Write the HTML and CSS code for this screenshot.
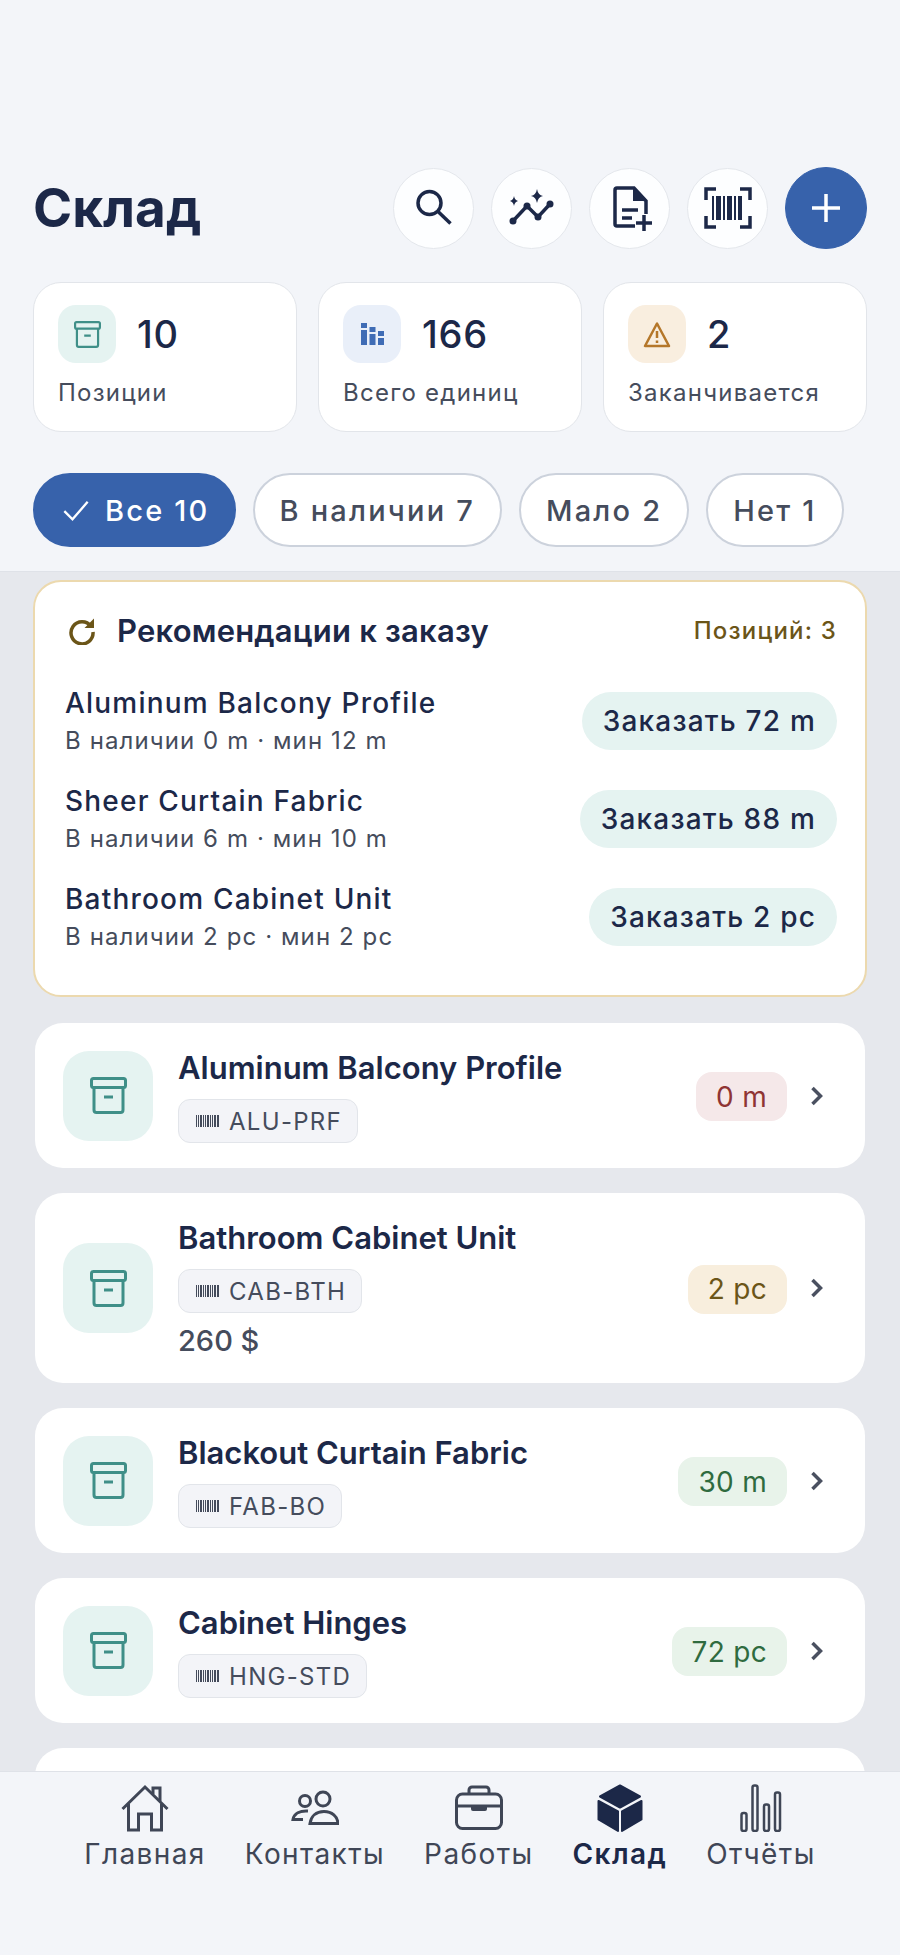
FILE: index.html
```html
<!DOCTYPE html>
<html lang="ru">
<head>
    <meta charset="UTF-8">
    <meta name="viewport" content="width=device-width, initial-scale=1.0">
    <title>Склад</title>
    <link rel="stylesheet" href="styles.css">
</head>
<body>
    <svg class="defs" width="0" height="0">
        <symbol id="box" viewBox="0 0 37 37">
            <rect x="1.500" y="1.500" width="34" height="9" rx="2" fill="none" stroke="currentColor" stroke-width="3"/>
            <path d="M4 10.500V33a2.500 2.500 0 0 0 2.500 2.500h24A2.500 2.500 0 0 0 33 33V10.500M14 20h9" fill="none" stroke="currentColor" stroke-width="3"/>
        </symbol>
        <symbol id="barcode-small" viewBox="0 0 23 12">
            <path d="M0 0h1v12H0zM2 0h1v12H2zM4 0h2v12H4zM7 0h1v12H7zM9 0h1v12H9zM11 0h2v12h-2zM14 0h1v12h-1zM16 0h1v12h-1zM18 0h2v12h-2zM21 0h2v12h-2z" fill="currentColor"/>
        </symbol>
        <symbol id="chevron" viewBox="0 0 14 20">
            <path d="M2.500 2l8 8-8 8" fill="none" stroke="currentColor" stroke-width="3.500"/>
        </symbol>
    </svg>

    <div class="app">
        <header class="top">
            <div class="title-row">
                <h1>Склад</h1>
                <div class="actions">
                    <button class="round-btn">
                        <svg width="48" height="48" viewBox="0 0 48 48" fill="none" stroke="#1c2848" stroke-width="3.500">
                            <circle cx="19.500" cy="19" r="11.500"/>
                            <path d="M28 27.500l12.500 12"/>
                        </svg>
                    </button>
                    <button class="round-btn">
                        <svg width="48" height="48" viewBox="0 0 48 48" fill="none" stroke="#1c2848">
                            <path d="M5 37l14-15 11 11 12-13" stroke-width="3.500"/>
                            <circle cx="5" cy="37" r="3.500" fill="#1c2848" stroke="none"/>
                            <circle cx="19" cy="22" r="3.500" fill="#1c2848" stroke="none"/>
                            <circle cx="30" cy="33" r="3.500" fill="#1c2848" stroke="none"/>
                            <circle cx="42" cy="20" r="3.500" fill="#1c2848" stroke="none"/>
                            <path d="M29 5q1 6 6 7q-5 1-6 7q-1-6-6-7q5-1 6-7zM6 12q.6 4 4 5q-3.400 1-4 5q-.6-4-4-5q3.400-1 4-5z" fill="#1c2848" stroke="none"/>
                        </svg>
                    </button>
                    <button class="round-btn">
                        <svg width="48" height="48" viewBox="0 0 48 48" fill="none" stroke="#1c2848" stroke-width="3.500">
                            <path d="M29 42H11a2 2 0 0 1-2-2V6a2 2 0 0 1 2-2h17l12 13v13"/>
                            <path d="M27 3l14 14H27z" fill="#1c2848" stroke="none"/>
                            <path d="M16 26h16M16 34h10M38 31v16M30 39h16"/>
                        </svg>
                    </button>
                    <button class="round-btn">
                        <svg width="50" height="48" viewBox="0 0 50 48" fill="none" stroke="#1c2848">
                            <path d="M13 5H3v11M37 5h10v11M13 43H3V32M37 43h10V32" stroke-width="3.500"/>
                            <path d="M9 12h2v24H9zM13 12h5v24h-5zM20 12h2v24h-2zM24 12h5v24h-5zM31 12h2v24h-2zM35 12h4v24h-4z" fill="#1c2848" stroke="none"/>
                        </svg>
                    </button>
                    <button class="round-btn primary">
                        <svg width="30" height="30" viewBox="0 0 30 30" fill="none" stroke="#fff" stroke-width="3.500">
                            <path d="M15 1v28M1 15h28"/>
                        </svg>
                    </button>
                </div>
            </div>

            <div class="stats">
                <div class="stat">
                    <div class="stat-top">
                        <span class="stat-icon teal"><svg width="27" height="27"><use href="#box"/></svg></span>
                        <span class="stat-value">10</span>
                    </div>
                    <div class="stat-label">Позиции</div>
                </div>
                <div class="stat">
                    <div class="stat-top">
                        <span class="stat-icon blue">
                            <svg width="23" height="22" viewBox="0 0 23 22" fill="currentColor">
                                <path d="M0 0h6v5H0zM0 7h6v15H0zM8.500 4h6v5h-6zM8.500 11h6v11h-6zM17 8h6v5h-6zM17 15h6v7h-6z"/>
                            </svg>
                        </span>
                        <span class="stat-value">166</span>
                    </div>
                    <div class="stat-label">Всего единиц</div>
                </div>
                <div class="stat">
                    <div class="stat-top">
                        <span class="stat-icon amber">
                            <svg width="28" height="27" viewBox="0 0 28 27" fill="none" stroke="currentColor" stroke-width="2.500">
                                <path d="M14 2.500L2 25h24z" stroke-linejoin="round"/>
                                <path d="M14 10v7M14 19.500v2.500"/>
                            </svg>
                        </span>
                        <span class="stat-value">2</span>
                    </div>
                    <div class="stat-label">Заканчивается</div>
                </div>
            </div>

            <div class="chips">
                <span class="chip active">
                    <svg width="28" height="28" viewBox="0 0 24 24" fill="none" stroke="#fff" stroke-width="2"><path d="M2 13l7 7L22 5"/></svg>
                    <span>Все 10</span>
                </span>
                <span class="chip">В наличии 7</span>
                <span class="chip">Мало 2</span>
                <span class="chip">Нет 1</span>
            </div>
        </header>

        <main class="content">
            <section class="reco">
                <div class="reco-head">
                    <svg width="28" height="28" viewBox="0 0 28 28" fill="none" stroke="#6b5518" stroke-width="3.500">
                        <path d="M23 9.500A11 11 0 1 0 25 15"/>
                        <path d="M26 1.500V11h-9.500z" fill="#6b5518" stroke="none"/>
                    </svg>
                    <h2>Рекомендации к заказу</h2>
                    <span class="reco-count">Позиций: 3</span>
                </div>
                <div class="reco-row">
                    <div>
                        <div class="reco-name">Aluminum Balcony Profile</div>
                        <div class="reco-sub">В наличии 0 m · мин 12 m</div>
                    </div>
                    <span class="order-pill">Заказать 72 m</span>
                </div>
                <div class="reco-row">
                    <div>
                        <div class="reco-name">Sheer Curtain Fabric</div>
                        <div class="reco-sub">В наличии 6 m · мин 10 m</div>
                    </div>
                    <span class="order-pill">Заказать 88 m</span>
                </div>
                <div class="reco-row">
                    <div>
                        <div class="reco-name">Bathroom Cabinet Unit</div>
                        <div class="reco-sub">В наличии 2 pc · мин 2 pc</div>
                    </div>
                    <span class="order-pill">Заказать 2 pc</span>
                </div>
            </section>

            <article class="item">
                <span class="item-icon"><svg width="37" height="37"><use href="#box"/></svg></span>
                <div class="item-body">
                    <div class="item-name">Aluminum Balcony Profile</div>
                    <span class="sku"><svg width="23" height="12"><use href="#barcode-small"/></svg>ALU-PRF</span>
                </div>
                <span class="qty out">0 m</span>
                <svg class="chevron" width="14" height="20"><use href="#chevron"/></svg>
            </article>

            <article class="item">
                <span class="item-icon"><svg width="37" height="37"><use href="#box"/></svg></span>
                <div class="item-body">
                    <div class="item-name">Bathroom Cabinet Unit</div>
                    <span class="sku"><svg width="23" height="12"><use href="#barcode-small"/></svg>CAB-BTH</span>
                    <div class="item-price">260 $</div>
                </div>
                <span class="qty low">2 pc</span>
                <svg class="chevron" width="14" height="20"><use href="#chevron"/></svg>
            </article>

            <article class="item">
                <span class="item-icon"><svg width="37" height="37"><use href="#box"/></svg></span>
                <div class="item-body">
                    <div class="item-name">Blackout Curtain Fabric</div>
                    <span class="sku"><svg width="23" height="12"><use href="#barcode-small"/></svg>FAB-BO</span>
                </div>
                <span class="qty ok">30 m</span>
                <svg class="chevron" width="14" height="20"><use href="#chevron"/></svg>
            </article>

            <article class="item">
                <span class="item-icon"><svg width="37" height="37"><use href="#box"/></svg></span>
                <div class="item-body">
                    <div class="item-name">Cabinet Hinges</div>
                    <span class="sku"><svg width="23" height="12"><use href="#barcode-small"/></svg>HNG-STD</span>
                </div>
                <span class="qty ok">72 pc</span>
                <svg class="chevron" width="14" height="20"><use href="#chevron"/></svg>
            </article>

            <article class="item"></article>
        </main>

        <nav class="tabbar">
            <a class="tab">
                <svg width="48" height="48" viewBox="0 0 48 48" fill="none" stroke="currentColor" stroke-width="3">
                    <path d="M1.500 25L24 3l22.500 22"/>
                    <path d="M7.500 20v26h10V30h13v16h10V20"/>
                    <path d="M32 10V4h7v13" />
                </svg>
                <span class="tab-label">Главная</span>
            </a>
            <a class="tab">
                <svg width="48" height="48" viewBox="0 0 48 48" fill="none" stroke="currentColor" stroke-width="3">
                    <circle cx="32" cy="15" r="7"/>
                    <circle cx="14" cy="17" r="5.500"/>
                    <path d="M19 39.500c1-7 6-12 14-12s13.500 5 14 12z"/>
                    <path d="M17 27c-8-.5-14 2.500-15 8.500h10"/>
                </svg>
                <span class="tab-label">Контакты</span>
            </a>
            <a class="tab">
                <svg width="48" height="48" viewBox="0 0 48 48" fill="none" stroke="currentColor" stroke-width="3">
                    <rect x="1.500" y="10" width="45" height="34.500" rx="6"/>
                    <path d="M14 10V6a3 3 0 0 1 3-3h14a3 3 0 0 1 3 3v4M2 22h44"/>
                    <path d="M16 22h16v3a2 2 0 0 1-2 2H18a2 2 0 0 1-2-2z" fill="currentColor" stroke="none"/>
                </svg>
                <span class="tab-label">Работы</span>
            </a>
            <a class="tab active">
                <svg width="46" height="48" viewBox="0 0 46 48" fill="currentColor" stroke="currentColor" stroke-width="2" stroke-linejoin="round">
                    <path d="M23 1.500L43 12.500 23 23.500 3 12.500z"/>
                    <path d="M1.500 17l19.500 10.500V47L1.500 35.500zM44.500 17L25 27.500V47l19.500-11.500z"/>
                </svg>
                <span class="tab-label">Склад</span>
            </a>
            <a class="tab">
                <svg width="42" height="48" viewBox="0 0 42 48" fill="none" stroke="currentColor" stroke-width="2.500">
                    <rect x="1.500" y="29" width="5" height="18" rx="2"/>
                    <rect x="12.500" y="1.500" width="5" height="45.500" rx="2"/>
                    <rect x="24" y="20.500" width="5" height="26.500" rx="2"/>
                    <rect x="35" y="8.500" width="5" height="38.500" rx="2"/>
                </svg>
                <span class="tab-label">Отчёты</span>
            </a>
        </nav>
    </div>
</body>
</html>
```

FILE: styles.css
```css
* {
    box-sizing: border-box;
}

body {
    margin: 0;
    font-family: 'Inter', 'Noto Sans', sans-serif;
    color: #1c2848;
    background: #f3f5f9;
}

.defs {
    position: absolute;
}

.app {
    width: 900px;
    height: 1955px;
    display: flex;
    flex-direction: column;
    overflow: hidden;
}

.top {
    padding: 167px 33px 24px;
    background: #f3f5f9;
    border-bottom: 1px solid #dfe2e8;
}

.title-row {
    display: flex;
    align-items: center;
    justify-content: space-between;
}

.title-row h1 {
    margin: 0;
    font-size: 53px;
    font-weight: 700;
}

.actions {
    display: flex;
    align-items: center;
    gap: 17px;
}

.round-btn {
    width: 81px;
    height: 81px;
    padding: 0;
    border: 1px solid #e4e7ec;
    border-radius: 50%;
    background: #fdfeff;
    display: flex;
    align-items: center;
    justify-content: center;
}

.round-btn.primary {
    width: 82px;
    height: 82px;
    background: #3762ab;
    border-color: #3762ab;
}

.stats {
    display: grid;
    grid-template-columns: repeat(3, 1fr);
    gap: 21px;
    margin-top: 33px;
}

.stat {
    height: 150px;
    padding: 22px 24px;
    background: #fff;
    border: 1px solid #e2e5ea;
    border-radius: 28px;
}

.stat-top {
    display: flex;
    align-items: center;
    gap: 21px;
}

.stat-icon {
    width: 58px;
    height: 58px;
    border-radius: 18px;
    display: flex;
    align-items: center;
    justify-content: center;
}

.stat-icon.teal {
    background: #e5f3f1;
    color: #3f8f88;
}

.stat-icon.blue {
    background: #e9eff9;
    color: #3f6cb5;
}

.stat-icon.amber {
    background: #f9eedf;
    color: #b5772a;
}

.stat-value {
    font-size: 38px;
    font-weight: 500;
    letter-spacing: 0.8px;
}

.stat-label {
    margin-top: 15px;
    font-size: 24px;
    line-height: 30px;
    letter-spacing: 1.250px;
    color: #454c5c;
}

.chips {
    display: flex;
    gap: 17px;
    margin-top: 41px;
}

.chip {
    height: 74px;
    padding: 0 25px;
    display: flex;
    align-items: center;
    gap: 15px;
    font-size: 29px;
    font-weight: 500;
    letter-spacing: 2.200px;
    color: #454c5c;
    background: #fff;
    border: 2px solid #ccd2dc;
    border-radius: 37px;
}

.chip.active {
    padding: 0 24px 0 27px;
    color: #fff;
    background: #3762ab;
    border-color: #3762ab;
}

.content {
    flex: 1;
    min-height: 0;
    padding: 8px 33px 0;
    background: #e6e8ed;
    display: flex;
    flex-direction: column;
    gap: 25px;
    overflow: hidden;
}

.reco {
    flex: none;
    height: 417px;
    margin-bottom: 1px;
    padding: 30px 28px 0 30px;
    background: #fff;
    border: 2px solid #ecd9ae;
    border-radius: 28px;
}

.reco-head {
    display: flex;
    align-items: center;
    gap: 21px;
    padding-left: 3px;
    margin-bottom: 22px;
}

.reco-head h2 {
    flex: 1;
    margin: 0;
    font-size: 31px;
    font-weight: 600;
    letter-spacing: 0.2px;
}

.reco-count {
    font-size: 24px;
    font-weight: 500;
    letter-spacing: 1.200px;
    color: #6b5518;
}

.reco-row {
    height: 98px;
    display: flex;
    align-items: center;
    justify-content: space-between;
}

.reco-name {
    font-size: 28px;
    font-weight: 500;
    letter-spacing: 1.200px;
}

.reco-sub {
    margin-top: 6px;
    font-size: 24px;
    letter-spacing: 1.100px;
    color: #454c5c;
}

.order-pill {
    height: 58px;
    margin-top: 2px;
    padding: 0 21px;
    display: flex;
    align-items: center;
    font-size: 28px;
    font-weight: 500;
    letter-spacing: 1.200px;
    background: #e5f3f1;
    border-radius: 29px;
}

.item {
    flex: none;
    min-height: 145px;
    margin: 0 2px;
    padding: 0 41px 0 28px;
    display: flex;
    align-items: center;
    background: #fff;
    border-radius: 28px;
}

.item-icon {
    flex: none;
    width: 90px;
    height: 90px;
    margin-right: 25px;
    border-radius: 26px;
    background: #e5f3f1;
    color: #3f8f88;
    display: flex;
    align-items: center;
    justify-content: center;
}

.item-body {
    flex: 1;
    padding: 25px 0;
}

.item-name {
    font-size: 31px;
    font-weight: 600;
    line-height: 40px;
}

.sku {
    display: inline-flex;
    align-items: center;
    gap: 10px;
    height: 44px;
    margin-top: 11px;
    padding: 0 15px 0 17px;
    font-size: 24px;
    letter-spacing: 1.300px;
    color: #454c5c;
    background: #f3f4f8;
    border: 1px solid #e2e5ea;
    border-radius: 12px;
    vertical-align: top;
}

.item-price {
    margin-top: 11px;
    font-size: 29px;
    line-height: 34px;
    font-weight: 500;
    color: #454c5c;
}

.qty {
    height: 49px;
    margin-top: 2px;
    padding: 0 20px;
    display: flex;
    align-items: center;
    font-size: 28px;
    letter-spacing: 0.3px;
    border-radius: 16px;
}

.qty.out {
    background: #f5e8e9;
    color: #8f3434;
}

.qty.low {
    background: #f8eedd;
    color: #6b5518;
}

.qty.ok {
    background: #e8f3ea;
    color: #2f6b3f;
}

.chevron {
    margin-left: 23px;
    color: #4a5060;
}

.tabbar {
    flex: none;
    height: 184px;
    padding-top: 12px;
    display: flex;
    justify-content: center;
    gap: 39px;
    background: #f3f5f9;
    border-top: 1px solid #dfe2e8;
}

.tab {
    display: flex;
    flex-direction: column;
    align-items: center;
    height: 92px;
    font-size: 28px;
    letter-spacing: 1.400px;
    color: #3f4656;
}

.tab-label {
    margin-top: 4px;
    line-height: 36px;
}

.tab.active {
    font-weight: 600;
    color: #1c2848;
}
```
